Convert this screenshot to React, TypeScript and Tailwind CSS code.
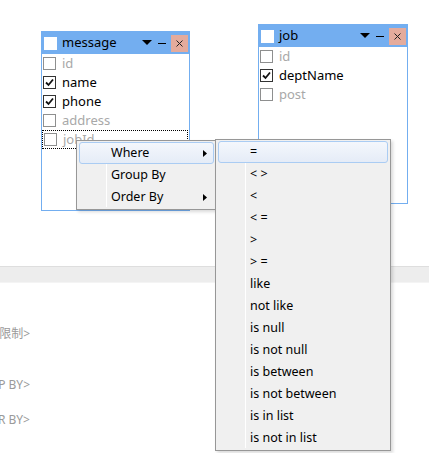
import React from "react";

const font = { fontFamily: '"Microsoft YaHei", "Noto Sans", "Noto Sans CJK SC", sans-serif' };

function Check({ checked }: { checked: boolean }) {
  return (
    <div
      className={`w-[13px] h-[13px] border bg-white flex items-center justify-center shrink-0 ${
        checked ? "border-[#333]" : "border-[#8e8f8f]"
      }`}
    >
      {checked && (
        <svg width="9" height="9" viewBox="0 0 9 9">
          <path d="M1 4.5 L3.5 7 L8 1.5" fill="none" stroke="#111" strokeWidth="1.8" />
        </svg>
      )}
    </div>
  );
}

type Field = { name: string; checked: boolean; focus?: boolean };

function TableWindow({
  title,
  fields,
  className,
}: {
  title: string;
  fields: Field[];
  className: string;
}) {
  return (
    <div className={`absolute border border-[#73aef0] bg-white flex flex-col ${className}`}>
      <div className="h-[22px] bg-[#73aef0] flex items-center pl-[2px] pr-[1px] shrink-0">
        <div className="w-[13px] h-[13px] bg-white" />
        <span className="ml-[5px] text-[13px] text-black flex-1">{title}</span>
        <svg width="10" height="6" viewBox="0 0 10 6" className="mr-[6px]">
          <path d="M0 0 L10 0 L5 5 Z" fill="#000" />
        </svg>
        <div className="w-[8px] h-[1px] bg-black mr-[5px]" />
        <div className="w-[17px] h-[17px] bg-[#e4ab9c] flex items-center justify-center">
          <svg width="7" height="7" viewBox="0 0 7 7">
            <path d="M0.5 0.5 L6.5 6.5 M6.5 0.5 L0.5 6.5" stroke="#222" strokeWidth="1" />
          </svg>
        </div>
      </div>
      <div className="flex flex-col">
        {fields.map((f) => (
          <div
            key={f.name}
            className={`h-[19px] flex items-center pl-[1px] ${
              f.focus ? "border border-dotted border-black mr-[1px]" : ""
            }`}
          >
            <Check checked={f.checked} />
            <span
              className={`ml-[6px] text-[13px] ${f.checked ? "text-black" : "text-[#a8a8a8]"}`}
            >
              {f.name}
            </span>
          </div>
        ))}
      </div>
    </div>
  );
}

function MenuItem({
  label,
  active,
  arrow,
}: {
  label: string;
  active?: boolean;
  arrow?: boolean;
}) {
  return (
    <div className="h-[22px] px-[2px] flex">
      <div
        className={`flex-1 flex items-center rounded-[3px] border ${
          active
            ? "border-[#aaccf3] bg-gradient-to-b from-[#f4f7fc] to-[#e5ecf7]"
            : "border-transparent"
        }`}
      >
        <span className="ml-[31px] text-[12.5px] text-black flex-1 leading-none">{label}</span>
        {arrow && (
          <svg width="4" height="7" viewBox="0 0 4 7" className="mr-[6px]">
            <path d="M0 0 L4 3.5 L0 7 Z" fill="#000" />
          </svg>
        )}
      </div>
    </div>
  );
}

function Menu({ children, className }: { children: React.ReactNode; className: string }) {
  return (
    <div
      className={`absolute bg-[#f0f0f0] border border-[#979797] py-[1px] shadow-[2px_2px_3px_rgba(0,0,0,0.15)] ${className}`}
    >
      <div className="absolute left-[29px] top-[2px] bottom-[2px] w-[1px] bg-[#e2e3e3] border-r border-white" />
      <div className="relative flex flex-col">{children}</div>
    </div>
  );
}

const ops = [
  "=",
  "< >",
  "<",
  "< =",
  ">",
  "> =",
  "like",
  "not like",
  "is null",
  "is not null",
  "is between",
  "is not between",
  "is in list",
  "is not in list",
];

export default function App() {
  return (
    <div className="relative w-[429px] h-[453px] overflow-hidden bg-white" style={font}>
      <div className="h-[266px]" />
      <div className="h-[17px] bg-[#ededed] border-t border-[#dedede] border-b border-b-[#f4f4f4]" />
      <div className="flex flex-col text-[12px] text-[#9a9a9a]">
        <div className="mt-[42px] w-[30px] overflow-hidden flex justify-end whitespace-nowrap">
          <span>&lt;无限制&gt;</span>
        </div>
        <div className="mt-[33px] w-[30px] overflow-hidden flex justify-end whitespace-nowrap">
          <span>&lt;GROUP BY&gt;</span>
        </div>
        <div className="mt-[17px] w-[30px] overflow-hidden flex justify-end whitespace-nowrap">
          <span>&lt;ORDER BY&gt;</span>
        </div>
      </div>

      <TableWindow
        title="message"
        className="left-[41px] top-[31px] w-[149px] h-[180px]"
        fields={[
          { name: "id", checked: false },
          { name: "name", checked: true },
          { name: "phone", checked: true },
          { name: "address", checked: false },
          { name: "jobId", checked: false, focus: true },
        ]}
      />
      <TableWindow
        title="job"
        className="left-[258px] top-[24px] w-[150px] h-[180px]"
        fields={[
          { name: "id", checked: false },
          { name: "deptName", checked: true },
          { name: "post", checked: false },
        ]}
      />

      <Menu className="left-[76px] top-[140px] w-[141px]">
        <MenuItem label="Where" active arrow />
        <MenuItem label="Group By" />
        <MenuItem label="Order By" arrow />
      </Menu>

      <Menu className="left-[215px] top-[139px] w-[176px]">
        {ops.map((o, i) => (
          <MenuItem key={o} label={o} active={i === 0} />
        ))}
      </Menu>
    </div>
  );
}
